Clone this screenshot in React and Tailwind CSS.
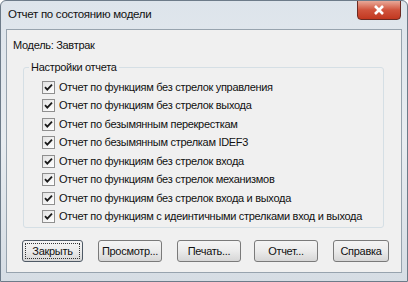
import React from "react";

const items = [
  "Отчет по функциям без стрелок управления",
  "Отчет по функциям без стрелок выхода",
  "Отчет по безымянным перекресткам",
  "Отчет по безымянным стрелкам IDEF3",
  "Отчет по функциям без стрелок входа",
  "Отчет по функциям без стрелок механизмов",
  "Отчет по функциям без стрелок входа и выхода",
  "Отчет по функциям с идеинтичными стрелками вход и выхода",
];

function Check() {
  return (
    <div className="w-[13px] h-[13px] border border-[#8f8f8f] bg-gradient-to-br from-[#e2e2e2] to-white flex items-center justify-center shrink-0">
      <svg width="9" height="9" viewBox="0 0 9 9">
        <path d="M1 4.2 L3.3 6.6 L8 1.6" stroke="#1a1a1a" strokeWidth="1.8" fill="none" />
      </svg>
    </div>
  );
}

function Btn({ children, w, focus }) {
  return (
    <div
      className={`h-[22px] ${w} rounded-[3px] border ${focus ? "border-[#4f5a66]" : "border-[#7a7a7a]"} bg-gradient-to-b from-[#f4f4f4] via-[#ebebeb] to-[#d6d6d6] flex items-center justify-center p-[2px] shrink-0`}
    >
      <div className={`w-full h-full flex items-center justify-center ${focus ? "border border-dotted border-[#333]" : ""}`}>
        <span className="text-[11px] text-[#111] leading-none tracking-[-0.3px]">{children}</span>
      </div>
    </div>
  );
}

export default function App() {
  return (
    <div
      className="w-[408px] h-[282px] overflow-hidden relative bg-gradient-to-b from-[#dde4eb] via-[#e8ecf0] to-[#d6dde4] border border-[#6d7b89] rounded-tl-[6px] rounded-tr-[6px] flex flex-col"
      style={{ fontFamily: "'Liberation Sans', Arial, sans-serif" }}
    >
      <div className="h-[28px] flex items-center pl-[7px] shrink-0">
        <span className="text-[11.5px] text-[#111] tracking-[-0.3px]">Отчет по состоянию модели</span>
      </div>
      <div className="absolute right-[6px] top-[-1px] w-[44px] h-[20px] rounded-b-[4px] border border-[#6b2a22] bg-gradient-to-b from-[#e8a898] via-[#d0533c] to-[#c2371f] flex items-center justify-center">
        <svg width="12" height="10" viewBox="0 0 12 10">
          <path d="M2 1 L10 9 M10 1 L2 9" stroke="#fff" strokeWidth="2.6" />
        </svg>
      </div>
      <div className="mx-[5px] h-[244px] border border-[#97a3ae] bg-[#f0f0f0] flex flex-col">
        <div className="pl-[6px] pt-[9px] h-[37px] shrink-0 text-[11px] text-[#111] leading-[13px] tracking-[-0.3px]">Модель: Завтрак</div>
        <div className="ml-[16px] w-[361px] h-[161px] shrink-0 border border-[#d5dfe5] rounded-[3px] relative pt-[10px] pl-[18px]">
          <div className="absolute left-[5px] top-[-8px] bg-[#f0f0f0] px-[2px] text-[11px] text-[#111] leading-[14px] tracking-[-0.3px]">
            Настройки отчета
          </div>
          <div className="flex flex-col">
            {items.map((t) => (
              <div key={t} className="h-[18.5px] flex items-center gap-[4px]">
                <Check />
                <span className="text-[11px] text-[#111] leading-none whitespace-nowrap tracking-[-0.3px]">{t}</span>
              </div>
            ))}
          </div>
        </div>
        <div className="flex items-center pl-[15px] mt-[12px]">
          <Btn w="w-[61px]" focus>Закрыть</Btn>
          <div className="w-[15px]" />
          <Btn w="w-[64px]">Просмотр...</Btn>
          <div className="w-[15px]" />
          <Btn w="w-[64px]">Печать...</Btn>
          <div className="w-[13px]" />
          <Btn w="w-[64px]">Отчет...</Btn>
          <div className="w-[15px]" />
          <Btn w="w-[56px]">Справка</Btn>
        </div>
      </div>
    </div>
  );
}
